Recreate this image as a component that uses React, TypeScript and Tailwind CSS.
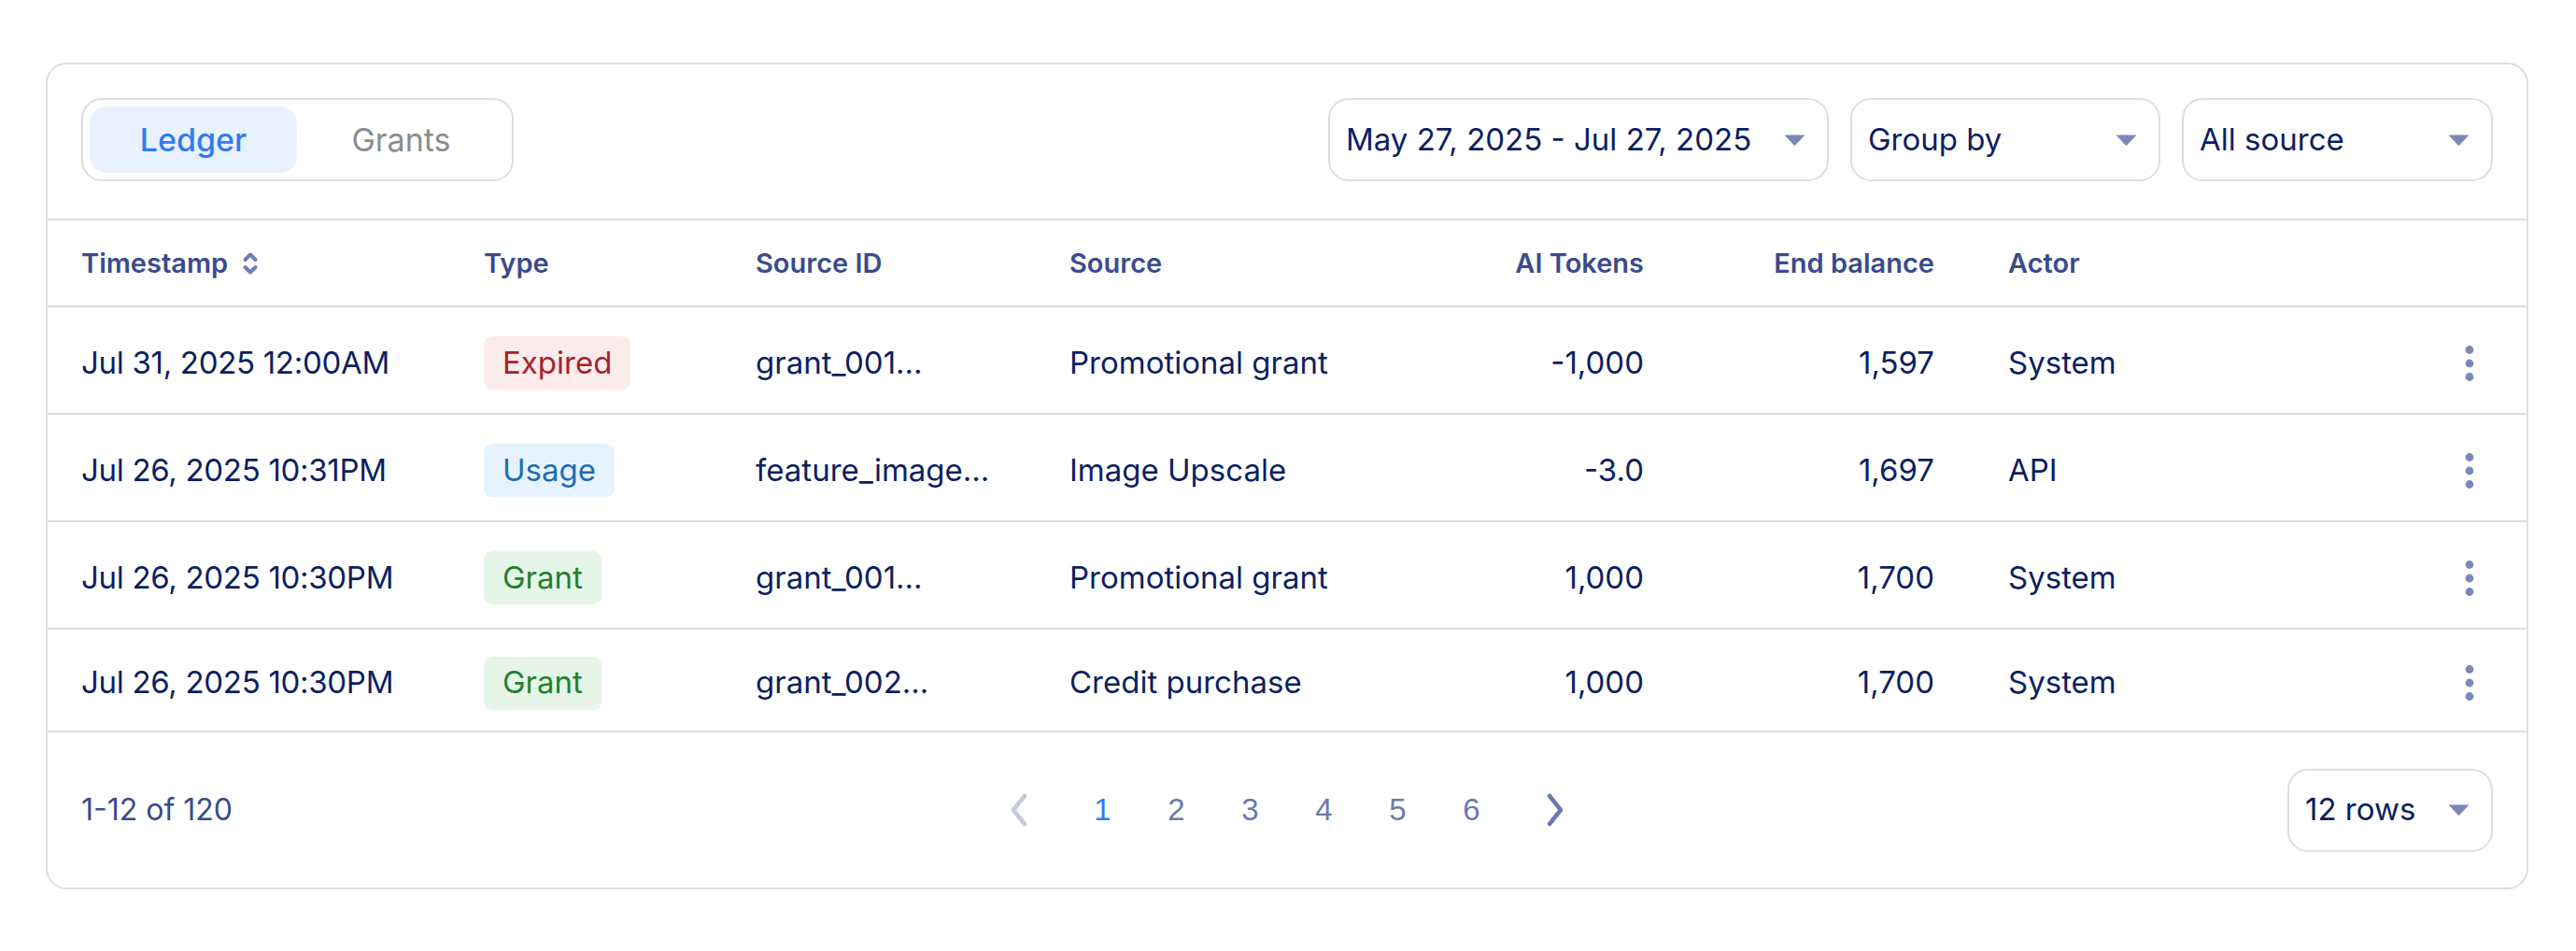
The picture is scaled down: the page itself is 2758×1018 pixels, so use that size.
import React from 'react';

type Kind = 'Expired' | 'Usage' | 'Grant';

interface LedgerRow {
  ts: string;
  kind: Kind;
  sourceId: string;
  source: string;
  tokens: string;
  balance: string;
  actor: string;
}

const rows: LedgerRow[] = [
  { ts: 'Jul 31, 2025 12:00AM', kind: 'Expired', sourceId: 'grant_001...', source: 'Promotional grant', tokens: '-1,000', balance: '1,597', actor: 'System' },
  { ts: 'Jul 26, 2025 10:31PM', kind: 'Usage', sourceId: 'feature_image...', source: 'Image Upscale', tokens: '-3.0', balance: '1,697', actor: 'API' },
  { ts: 'Jul 26, 2025 10:30PM', kind: 'Grant', sourceId: 'grant_001...', source: 'Promotional grant', tokens: '1,000', balance: '1,700', actor: 'System' },
  { ts: 'Jul 26, 2025 10:30PM', kind: 'Grant', sourceId: 'grant_002...', source: 'Credit purchase', tokens: '1,000', balance: '1,700', actor: 'System' },
];

const badgeStyles: Record<Kind, string> = {
  Expired: 'bg-[#fcebeb] text-[#a3232f]',
  Usage: 'bg-[#e6f3fe] text-[#1f6db3]',
  Grant: 'bg-[#e5f6e8] text-[#237f30]',
};

function Caret() {
  return (
    <svg width="23" height="12" viewBox="0 0 23 12" className="shrink-0">
      <path d="M0.5 0.5H22.5L12.2 11.4Q11.5 12 10.8 11.4Z" fill="#7b88b6" />
    </svg>
  );
}

function Select({ label, className }: { label: string; className: string }) {
  return (
    <div className={`h-[89px] border-2 border-[#dedede] rounded-[22px] pl-[17px] pr-[23px] flex items-center justify-between ${className}`}>
      <span className="text-[33px] text-[#0c1f63] whitespace-nowrap">{label}</span>
      <Caret />
    </div>
  );
}

function Kebab() {
  return (
    <svg width="10" height="40" viewBox="0 0 10 40">
      <circle cx="5" cy="5.5" r="4.4" fill="#7b88b6" />
      <circle cx="5" cy="20" r="4.4" fill="#7b88b6" />
      <circle cx="5" cy="34.5" r="4.4" fill="#7b88b6" />
    </svg>
  );
}

function SortIcon() {
  return (
    <svg width="18" height="28" viewBox="0 0 18 28" className="ml-[15px]">
      <path d="M3.5 10L9 4.5L14.5 10" fill="none" stroke="#6e7eb2" strokeWidth="4" strokeLinecap="round" strokeLinejoin="round" />
      <path d="M3.5 18L9 23.5L14.5 18" fill="none" stroke="#6e7eb2" strokeWidth="4" strokeLinecap="round" strokeLinejoin="round" />
    </svg>
  );
}

function Chevron({ dir, color }: { dir: 'left' | 'right'; color: string }) {
  return (
    <svg width="22" height="36" viewBox="0 0 22 36">
      <path
        d={dir === 'left' ? 'M17 3L5 18L17 33' : 'M5 3L17 18L5 33'}
        fill="none"
        stroke={color}
        strokeWidth="4.5"
        strokeLinecap="round"
        strokeLinejoin="round"
      />
    </svg>
  );
}

export default function App() {
  return (
    <div className="min-h-screen bg-white pt-[67px] pl-[49px] pr-[51px] font-['Inter','Liberation_Sans',sans-serif]">
      <div className="border-2 border-[#dedede] rounded-[22px] bg-white">
        {/* Toolbar */}
        <div className="flex items-center justify-between px-[36px] pt-[36px] pb-[40px] border-b-2 border-[#dedede]">
          <div className="w-[463px] h-[89px] border-2 border-[#dedede] rounded-[22px] p-[7px] flex">
            <div className="w-[222px] h-full rounded-[18px] bg-[#e8f1fe] flex items-center justify-center text-[34px] font-medium text-[#2f7cf0]">
              Ledger
            </div>
            <div className="flex-1 flex items-center justify-center text-[34px] text-[#8c8c8c]">Grants</div>
          </div>
          <div className="flex items-center gap-[23px]">
            <Select label="May 27, 2025 - Jul 27, 2025" className="w-[536px]" />
            <Select label="Group by" className="w-[332px]" />
            <Select label="All source" className="w-[333px]" />
          </div>
        </div>

        {/* Header */}
        <div className="flex items-center h-[93px] px-[36px] border-b-2 border-[#dedede] text-[29px] font-semibold text-[#3a4b8c]">
          <div className="w-[431px] flex items-center">
            Timestamp
            <SortIcon />
          </div>
          <div className="w-[291px]">Type</div>
          <div className="w-[336px]">Source ID</div>
          <div className="w-[400px]">Source</div>
          <div className="w-[215px] text-right">AI Tokens</div>
          <div className="w-[311px] text-right">End balance</div>
          <div className="ml-[79px] flex-1">Actor</div>
          <div className="w-[50px]" />
        </div>

        {/* Rows */}
        {rows.map((r, i) => (
          <div
            key={i}
            className={`flex items-center px-[36px] pt-[6px] border-b-2 border-[#dedede] text-[33px] text-[#0c1f63] ${i === rows.length - 1 ? 'h-[110px]' : 'h-[115px]'}`}
          >
            <div className="w-[431px] whitespace-nowrap tracking-[-0.3px]">{r.ts}</div>
            <div className="w-[291px]">
              <span className={`inline-flex items-center h-[57px] px-[20px] rounded-[9px] ${badgeStyles[r.kind]}`}>{r.kind}</span>
            </div>
            <div className="w-[336px] whitespace-nowrap">{r.sourceId}</div>
            <div className="w-[400px] whitespace-nowrap">{r.source}</div>
            <div className="w-[215px] text-right">{r.tokens}</div>
            <div className="w-[311px] text-right">{r.balance}</div>
            <div className="ml-[79px] flex-1">{r.actor}</div>
            <div className="w-[50px] flex justify-center">
              <Kebab />
            </div>
          </div>
        ))}

        {/* Footer */}
        <div className="h-[166px] px-[36px] flex items-center">
          <div className="flex-1 text-[32px] text-[#3a4b8c]">1-12 of 120</div>
          <div className="flex items-center font-['Liberation_Sans',Arial,sans-serif] text-[33px] text-[#6b7bab]">
            <div className="w-[40px] flex justify-center">
              <Chevron dir="left" color="#c3cadd" />
            </div>
            <div className="ml-[30px] flex">
              {['1', '2', '3', '4', '5', '6'].map((p) => (
                <div key={p} className={`w-[79px] text-center ${p === '1' ? 'text-[#2f7cf6]' : ''}`}>
                  {p}
                </div>
              ))}
            </div>
            <div className="ml-[30px] w-[40px] flex justify-center">
              <Chevron dir="right" color="#6b7bab" />
            </div>
          </div>
          <div className="flex-1 flex justify-end">
            <Select label="12 rows" className="w-[220px]" />
          </div>
        </div>
      </div>
    </div>
  );
}
